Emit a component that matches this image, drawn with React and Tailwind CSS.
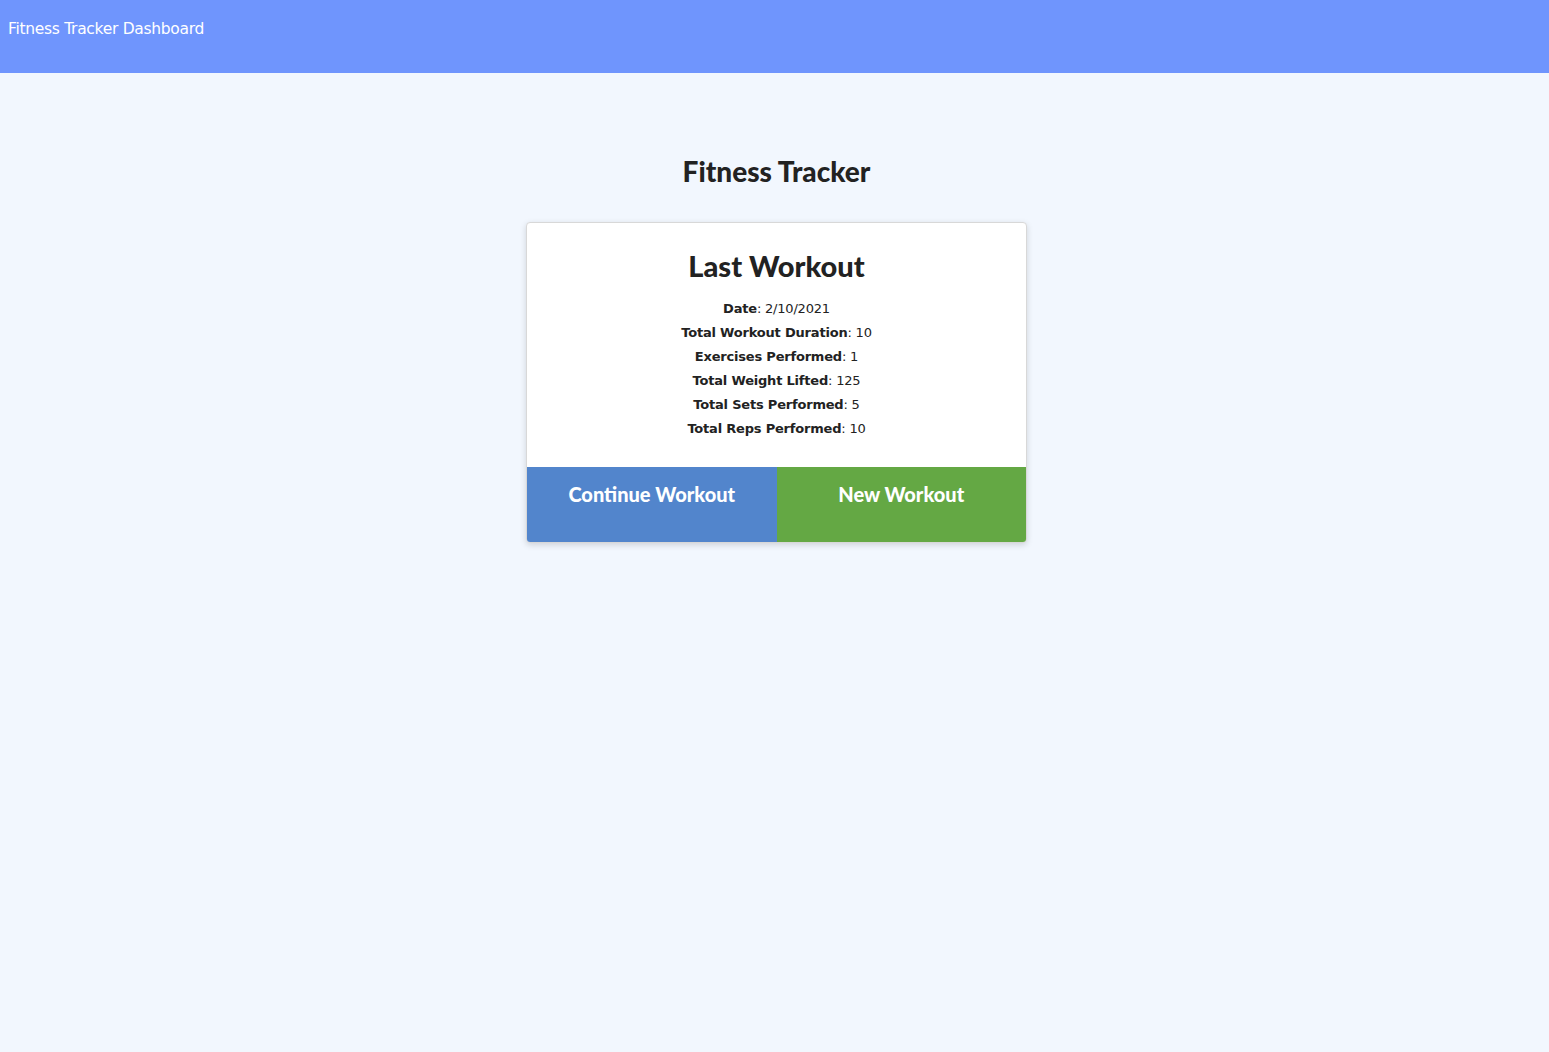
import React from "react";

const lastWorkout = [
  ["Date", "2/10/2021"],
  ["Total Workout Duration", "10"],
  ["Exercises Performed", "1"],
  ["Total Weight Lifted", "125"],
  ["Total Sets Performed", "5"],
  ["Total Reps Performed", "10"],
];

export default function App() {
  return (
    <div className="min-h-screen bg-[#f2f7fe] text-[#222]">
      <nav className="h-[73px] bg-[#6f95fd] px-2 pt-[16px]">
        <span className="font-['DejaVu_Sans',sans-serif] text-[15.5px] tracking-[-0.3px] text-white">
          Fitness Tracker Dashboard
        </span>
      </nav>

      <main className="flex flex-col items-center pl-[4px] pt-[80px]">
        <h1 className="font-['Lato',sans-serif] text-[28px] font-black leading-9 text-[#222]">
          Fitness Tracker
        </h1>

        <div className="mt-[33px] w-[501px] overflow-hidden rounded border border-[#d8d8d8] bg-white shadow-[0_2px_6px_rgba(0,0,0,0.15)]">
          <div className="px-4 pt-[25px] pb-[26px] text-center">
            <h2 className="font-['Lato',sans-serif] text-[29px] font-black leading-9">
              Last Workout
            </h2>
            <ul className="mt-[13px] font-['DejaVu_Sans',sans-serif] text-[13px] tracking-[-0.2px]">
              {lastWorkout.map(([label, value]) => (
                <li key={label} className="leading-6">
                  <strong className="font-bold">{label}</strong>: {value}
                </li>
              ))}
            </ul>
          </div>
          <div className="grid grid-cols-2">
            <button className="flex h-[75px] justify-center bg-[#5285cc] pt-[12px] font-['Lato',sans-serif] text-[20px] font-black text-white">
              Continue Workout
            </button>
            <button className="flex h-[75px] justify-center bg-[#64a844] pt-[12px] font-['Lato',sans-serif] text-[20px] font-black text-white">
              New Workout
            </button>
          </div>
        </div>
      </main>
    </div>
  );
}
